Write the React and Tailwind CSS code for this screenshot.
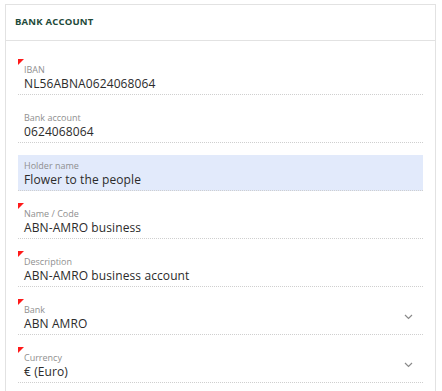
import React from 'react';

const fields = [
    { label: 'IBAN', value: 'NL56ABNA0624068064', required: true },
    { label: 'Bank account', value: '0624068064' },
    { label: 'Holder name', value: 'Flower to the people', active: true },
    { label: 'Name / Code', value: 'ABN-AMRO business', required: true },
    { label: 'Description', value: 'ABN-AMRO business account', required: true },
    { label: 'Bank', value: 'ABN AMRO', required: true, select: true },
    { label: 'Currency', value: '€ (Euro)', required: true, select: true },
];

const Chevron = () => (
    <svg width="9" height="6" viewBox="0 0 9 6" fill="none" className="text-[#8a8a8a]">
        <path d="M1 1l3.5 3.5L8 1" stroke="currentColor" strokeWidth="1.2" />
    </svg>
);

const Field = ({ label, value, required, active, select }) => (
    <div className={`relative mb-3 flex h-9 items-center border-b border-dotted border-[#cfcfcf] pl-1.5 pr-2.5 ${active ? 'bg-[#e2eafb]' : ''}`}>
        {required && (
            <span className="absolute left-0 top-0 h-0 w-0 border-r-[6px] border-t-[6px] border-r-transparent border-t-[#ff1a1a]" />
        )}
        <div className="flex flex-1 flex-col self-start pt-[5px]">
            <span className="text-[9px] leading-[12px] text-[#8f8f8f]">{label}</span>
            <span className="text-[12px] leading-[15px] tracking-[0.1px] text-[#2b2b2b]">{value}</span>
        </div>
        {select && <Chevron />}
    </div>
);

const App = () => {
    return (
        <div className="h-[391px] w-[442px] overflow-hidden bg-white pl-[5px] pt-1" style={{ fontFamily: '"Open Sans", sans-serif' }}>
            <div className="w-[431px] border border-[#e2e2e2] bg-white">
                <div className="flex h-9 items-center border-b border-[#e2e2e2] px-[9px]">
                    <h2 className="text-[9.5px] font-bold uppercase tracking-[0.2px] text-[#1e4a3a]">Bank account</h2>
                </div>
                <div className="px-3 pt-[18px]">
                    {fields.map(f => (
                        <Field key={f.label} {...f} />
                    ))}
                </div>
            </div>
        </div>
    );
};

export default App;
